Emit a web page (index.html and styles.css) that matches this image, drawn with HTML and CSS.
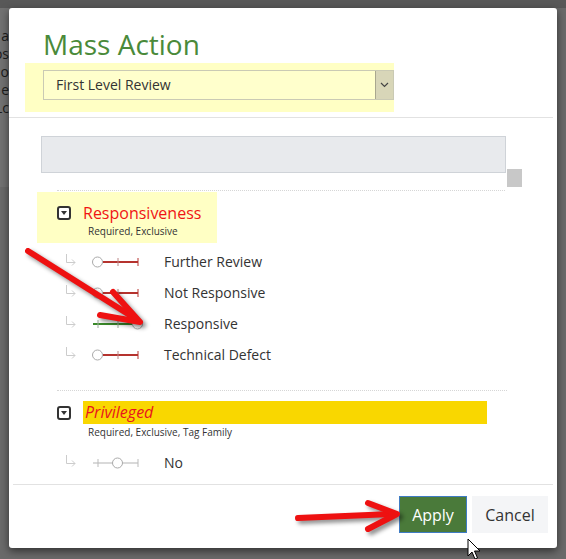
FILE: index.html
```html
<!DOCTYPE html>
<html lang="en">
<head>
    <meta charset="UTF-8">
    <title>Mass Action</title>
    <link rel="stylesheet" href="styles.css">
</head>
<body>
    <div class="backdrop-top"></div>
    <div class="stage">
        <div class="backdrop-left">
            <div class="backdrop-line">a</div>
            <div class="backdrop-line">os</div>
            <div class="backdrop-line">o</div>
            <div class="backdrop-line">e</div>
            <div class="backdrop-line">Lc</div>
        </div>

        <div class="modal">
            <div class="modal-header">
                <h1 class="modal-title">Mass Action</h1>
                <div class="layout-pick">
                    <div class="select">
                        <span class="select-value">First Level Review</span>
                        <span class="select-btn">
                            <svg width="9" height="6" viewBox="0 0 9 6"><path d="M1 1 L4.5 4.5 L8 1" fill="none" stroke="#444" stroke-width="1.2"/></svg>
                        </span>
                    </div>
                </div>
            </div>

            <div class="modal-body">
                <div class="search-row">
                    <div class="search-box"></div>
                    <div class="scroll-thumb"></div>
                </div>

                <div class="sep"></div>
                <div class="field-head field-head--hl">
                    <svg class="field-icon" width="14" height="14" viewBox="0 0 14 14"><rect x="1" y="1" width="12" height="12" rx="2" fill="#fff" stroke="#333" stroke-width="2"/><path d="M4 5 L10 5 L7 9 Z" fill="#333"/></svg>
                    <div class="field-text">
                        <div class="field-name">Responsiveness</div>
                        <div class="field-meta">Required, Exclusive</div>
                    </div>
                </div>
                <ul class="choices">
                    <li class="choice">
                        <svg class="branch" width="11" height="14" viewBox="0 0 11 14"><path d="M1.5 1 V9.5 H10 M7 6.5 L10 9.5 L7 12.5" fill="none" stroke="#ccc" stroke-width="1"/></svg>
                        <svg class="toggle" width="52" height="14" viewBox="0 0 52 14"><line x1="12" y1="7" x2="47" y2="7" stroke="#b5332e" stroke-width="2"/><line x1="27" y1="3" x2="27" y2="11" stroke="#b88" stroke-width="1"/><line x1="47" y1="3" x2="47" y2="11" stroke="#b5332e" stroke-width="1"/><circle cx="6.5" cy="7" r="5" fill="#fff" stroke="#aaa"/></svg>
                        <span class="choice-label">Further Review</span>
                    </li>
                    <li class="choice">
                        <svg class="branch" width="11" height="14" viewBox="0 0 11 14"><path d="M1.5 1 V9.5 H10 M7 6.5 L10 9.5 L7 12.5" fill="none" stroke="#ccc" stroke-width="1"/></svg>
                        <svg class="toggle" width="52" height="14" viewBox="0 0 52 14"><line x1="12" y1="7" x2="47" y2="7" stroke="#b5332e" stroke-width="2"/><line x1="27" y1="3" x2="27" y2="11" stroke="#b88" stroke-width="1"/><line x1="47" y1="3" x2="47" y2="11" stroke="#b5332e" stroke-width="1"/><circle cx="6.5" cy="7" r="5" fill="#fff" stroke="#aaa"/></svg>
                        <span class="choice-label">Not Responsive</span>
                    </li>
                    <li class="choice">
                        <svg class="branch" width="11" height="14" viewBox="0 0 11 14"><path d="M1.5 1 V9.5 H10 M7 6.5 L10 9.5 L7 12.5" fill="none" stroke="#ccc" stroke-width="1"/></svg>
                        <svg class="toggle" width="52" height="14" viewBox="0 0 52 14"><line x1="2" y1="7" x2="41" y2="7" stroke="#3a8a2a" stroke-width="2"/><line x1="7" y1="3" x2="7" y2="11" stroke="#9a9" stroke-width="1"/><line x1="27" y1="3" x2="27" y2="11" stroke="#9a9" stroke-width="1"/><circle cx="46.5" cy="7" r="5" fill="#fff" stroke="#aaa"/></svg>
                        <span class="choice-label">Responsive</span>
                    </li>
                    <li class="choice">
                        <svg class="branch" width="11" height="14" viewBox="0 0 11 14"><path d="M1.5 1 V9.5 H10 M7 6.5 L10 9.5 L7 12.5" fill="none" stroke="#ccc" stroke-width="1"/></svg>
                        <svg class="toggle" width="52" height="14" viewBox="0 0 52 14"><line x1="12" y1="7" x2="47" y2="7" stroke="#b5332e" stroke-width="2"/><line x1="27" y1="3" x2="27" y2="11" stroke="#b88" stroke-width="1"/><line x1="47" y1="3" x2="47" y2="11" stroke="#b5332e" stroke-width="1"/><circle cx="6.5" cy="7" r="5" fill="#fff" stroke="#aaa"/></svg>
                        <span class="choice-label">Technical Defect</span>
                    </li>
                </ul>

                <div class="sep sep--wide"></div>
                <div class="field-head field-head--plain">
                    <svg class="field-icon field-icon--low" width="14" height="14" viewBox="0 0 14 14"><rect x="1" y="1" width="12" height="12" rx="2" fill="#fff" stroke="#333" stroke-width="2"/><path d="M4 5 L10 5 L7 9 Z" fill="#333"/></svg>
                    <div class="field-text">
                        <div class="field-name field-name--flag">Privileged</div>
                        <div class="field-meta">Required, Exclusive, Tag Family</div>
                    </div>
                </div>
                <ul class="choices choices--tight">
                    <li class="choice">
                        <svg class="branch" width="11" height="14" viewBox="0 0 11 14"><path d="M1.5 1 V9.5 H10 M7 6.5 L10 9.5 L7 12.5" fill="none" stroke="#ccc" stroke-width="1"/></svg>
                        <svg class="toggle" width="52" height="14" viewBox="0 0 52 14"><line x1="2" y1="7" x2="47" y2="7" stroke="#ccc" stroke-width="1.5"/><line x1="7" y1="3" x2="7" y2="11" stroke="#bbb" stroke-width="1"/><line x1="47" y1="3" x2="47" y2="11" stroke="#bbb" stroke-width="1"/><circle cx="26.5" cy="7" r="5" fill="#fff" stroke="#aaa"/></svg>
                        <span class="choice-label">No</span>
                    </li>
                </ul>
            </div>

            <div class="modal-footer">
                <button class="btn btn-apply">Apply</button>
                <button class="btn btn-cancel">Cancel</button>
            </div>
        </div>
    </div>

    <!-- screenshot annotations drawn over the dialog -->
    <svg class="annotations" width="566" height="559" viewBox="0 0 566 559">
        <g class="marks" fill="none" stroke="#ee1111" stroke-width="6" stroke-linecap="round" stroke-linejoin="round">
            <line x1="28" y1="251" x2="136" y2="319"/>
            <polyline points="113,292 140,322 100,315"/>
            <line x1="298" y1="518" x2="392" y2="514"/>
            <polyline points="368,503 397,514 368,529"/>
        </g>
        <path d="M468 539 L468 556 L472 552 L475 559 L477.5 558 L474.5 551 L480 551 Z" fill="#fff" stroke="#000" stroke-width="1"/>
    </svg>
</body>
</html>
```

FILE: styles.css
```css
body, html {
    margin: 0;
    padding: 0;
    height: 100%;
    overflow: hidden;
    font-family: 'Open Sans', 'Liberation Sans', sans-serif;
    background-color: #6a6a6a;
}
.backdrop-top {
    height: 8px;
    background-color: #585858;
}
.stage {
    display: flex;
}
.backdrop-left {
    width: 9px;
    height: 160px;
    overflow: hidden;
    padding-top: 19px;
    font-size: 14px;
    line-height: 18px;
    color: #1c1c1c;
    background-color: #727272;
}
.backdrop-line {
    display: flex;
    justify-content: flex-end;
    white-space: nowrap;
}
.modal {
    width: 548px;
    height: 540px;
    background-color: #fff;
    border-radius: 3px;
    box-shadow: 0 3px 8px rgba(0, 0, 0, 0.55);
    display: flex;
    flex-direction: column;
}
.modal-header {
    padding: 19px 0 5px 0;
    margin-right: 4px;
    border-bottom: 1px solid #e2e2e2;
}
.modal-title {
    margin: 0 0 0 34px;
    font-size: 28px;
    line-height: 34px;
    font-weight: normal;
    color: #4a8a3a;
}
.layout-pick {
    margin: 2px 0 0 16px;
    width: 351px;
    padding: 7px 0 12px 18px;
    background-color: #ffffc4;
}
.select {
    display: flex;
    height: 30px;
    box-sizing: border-box;
    border: 1px solid #cacab4;
    background-color: #ffffcc;
}
.select-value {
    flex: 1;
    padding-left: 12px;
    font-size: 14px;
    line-height: 28px;
    color: #333;
}
.select-btn {
    width: 17px;
    display: flex;
    align-items: center;
    justify-content: center;
    background-color: #d8d6b8;
    border-left: 1px solid #a9a78f;
}
.modal-body {
    flex: 1;
    padding-top: 18px;
}
.search-row {
    display: flex;
    margin-left: 32px;
}
.search-box {
    width: 465px;
    height: 37px;
    box-sizing: border-box;
    background-color: #e8eaed;
    border: 1px solid #cfd3d8;
}
.scroll-thumb {
    width: 15px;
    height: 18px;
    margin: 33px 0 0 1px;
    background-color: #c8c8c8;
}
.sep {
    margin: 3px 52px 0 48px;
    border-top: 1px dotted #d6d6d6;
}
.sep--wide {
    margin-top: 20px;
    margin-right: 50px;
}
.field-head {
    display: flex;
    align-items: flex-start;
    margin-left: 28px;
    padding-left: 20px;
}
.field-head--hl {
    width: 160px;
    margin-top: 1px;
    padding-top: 11px;
    padding-bottom: 5px;
    background-color: #ffffc4;
}
.field-head--plain {
    margin-top: 10px;
}
.field-icon {
    margin-top: 3px;
    margin-right: 12px;
    flex-shrink: 0;
}
.field-icon--low {
    margin-top: 5px;
}
.field-name {
    font-size: 16px;
    line-height: 20px;
    color: #f01414;
}
.field-name--flag {
    width: 402px;
    padding-left: 2px;
    line-height: 23px;
    font-style: italic;
    color: #e8141e;
    background-color: #f9d700;
}
.field-meta {
    margin: 1px 0 0 5px;
    font-size: 10px;
    line-height: 14px;
    color: #333;
}
.choices {
    list-style: none;
    margin: 3px 0 0 0;
    padding: 0;
}
.choices--tight {
    margin-top: 8px;
}
.choice {
    display: flex;
    align-items: center;
    height: 31px;
    padding-left: 56px;
}
.branch {
    margin-top: -4px;
}
.toggle {
    margin-left: 15px;
}
.choice-label {
    margin-left: 21px;
    font-size: 14px;
    color: #333;
}
.modal-footer {
    display: flex;
    justify-content: flex-end;
    gap: 5px;
    margin: 0 4px;
    padding: 11px 5px 15px 0;
    border-top: 1px solid #e2e2e2;
}
.btn {
    height: 37px;
    font-family: 'Open Sans', 'Liberation Sans', sans-serif;
    font-size: 16px;
    border: none;
    padding: 0;
    cursor: pointer;
}
.btn-apply {
    width: 68px;
    color: #fff;
    background-color: #4a7a3a;
    border: 1px solid #3f7cc4;
}
.btn-cancel {
    width: 76px;
    color: #333;
    background-color: #f4f5f7;
}
.annotations {
    position: absolute;
    top: 0;
    left: 0;
    pointer-events: none;
}
.marks {
    filter: drop-shadow(3px 3px 2px rgba(0, 0, 0, 0.45));
}
```
